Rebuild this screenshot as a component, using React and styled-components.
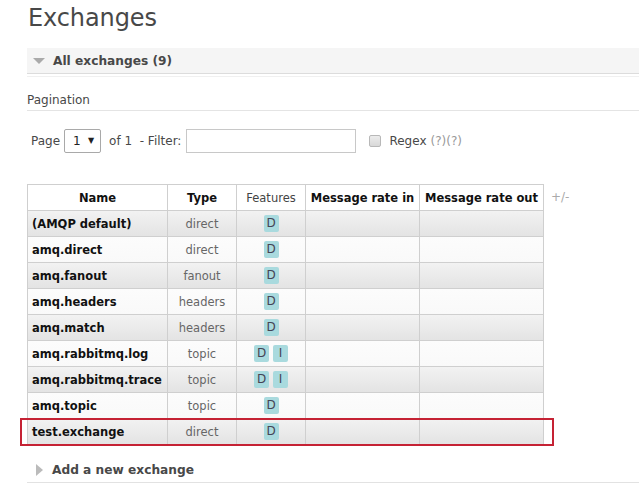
import React from "react";
import styled, { createGlobalStyle } from "styled-components";

const GlobalStyle = createGlobalStyle`
  body {
    margin: 0;
    background: #fff;
    font-family: "DejaVu Sans", Verdana, sans-serif;
    font-size: 12px;
    color: #484848;
  }
`;

const Page = styled.div`
  padding: 0 0 0 27px;
`;

const Title = styled.h1`
  margin: 0;
  padding: 4px 0 0 1px;
  height: 44px;
  font-size: 24px;
  font-weight: normal;
  color: #484848;
  letter-spacing: -0.1px;
`;

const SectionHeader = styled.div`
  display: flex;
  align-items: center;
  gap: 8px;
  height: 25px;
  padding-left: 6px;
  background: #f5f5f5;
  border-bottom: 1px solid #dcdcdc;
  font-size: 12.2px;
  font-weight: bold;
  color: #484848;
`;

const Faint = styled.div`
  height: 2px;
  border-bottom: 1px solid #f0f0f0;
`;

const Arrow = styled.span`
  width: 0;
  height: 0;
  border-style: solid;
  border-color: transparent;
  ${({ $open }) =>
    $open
      ? `border-width: 6px 6px 0 6px; border-top-color: #aaa;`
      : `border-width: 6px 0 6px 7px; border-left-color: #bbb;`}
`;

const SubHeading = styled.h3`
  margin: 16px 0 0;
  padding-bottom: 3px;
  font-size: 12px;
  font-weight: normal;
  color: #484848;
  border-bottom: 1px solid #e4e4e4;
`;

const FilterRow = styled.div`
  display: flex;
  align-items: center;
  margin: 17px 0 0 4px;
  height: 25px;
  font-size: 12px;
  color: #484848;
`;

const Select = styled.div`
  display: flex;
  align-items: center;
  justify-content: space-between;
  box-sizing: border-box;
  width: 37px;
  height: 24px;
  margin: 0 8px 0 4px;
  padding: 0 6px 0 8px;
  border: 1px solid #a9a9a9;
  border-radius: 2px;
  background: #fff;
  color: #222;
  font-size: 12px;
`;

const SelectArrow = styled.span`
  font-size: 8px;
  color: #222;
`;

const Input = styled.div`
  box-sizing: border-box;
  width: 170px;
  height: 24px;
  margin-left: 5px;
  border: 1px solid #c8c8c8;
  background: #fff;
`;

const Check = styled.span`
  box-sizing: border-box;
  width: 12px;
  height: 12px;
  margin: 0 8px 0 13px;
  border: 1px solid #b8b8b8;
  border-radius: 2px;
  background: linear-gradient(#ececec, #d8d8d8);
`;

const Help = styled.span`
  color: #999;
  margin-left: 4px;
`;

const TableWrap = styled.div`
  display: flex;
  align-items: flex-start;
  margin-top: 31px;
`;

const Table = styled.table`
  border-collapse: collapse;
  table-layout: fixed;
  width: 517px;
  font-size: 11.5px;
`;

const Th = styled.th`
  height: 25px;
  padding: 0 4px;
  border: 1px solid #cfcfcf;
  background: #fff;
  font-weight: ${({ $light }) => ($light ? "normal" : "bold")};
  color: ${({ $light }) => ($light ? "#444" : "#111")};
  text-align: center;
  white-space: nowrap;
`;

const Row = styled.tr`
  background: ${({ $alt }) =>
    $alt
      ? "linear-gradient(#f2f2f2, #e3e3e3)"
      : "linear-gradient(#fcfcfc, #f9f9f9)"};
`;

const Td = styled.td`
  height: 25px;
  padding: 0 4px;
  border: 1px solid #cfcfcf;
  text-align: center;
  white-space: nowrap;
  color: #666;
`;

const NameCell = styled(Td)`
  text-align: left;
  font-weight: bold;
  color: #111;
`;

const Badge = styled.span`
  display: inline-block;
  min-width: 15px;
  height: 17px;
  line-height: 17px;
  margin: 0 2px;
  border-radius: 2px;
  background: #a9dade;
  color: #445;
  font-size: 12px;
  text-align: center;
`;

const PlusMinus = styled.span`
  margin: 6px 0 0 7px;
  color: #aaa;
  font-size: 12px;
`;

const Marked = styled.div`
  position: absolute;
  left: -7px;
  right: -10px;
  bottom: -1px;
  height: 28px;
  box-sizing: border-box;
  border: 2px solid #c52234;
  pointer-events: none;
`;

const TableArea = styled.div`
  position: relative;
`;

const Footer = styled.div`
  display: flex;
  align-items: center;
  gap: 9px;
  margin-top: 12px;
  height: 25px;
  padding-left: 9px;
  border-bottom: 1px solid #e2e2e2;
  font-size: 12.2px;
  font-weight: bold;
  color: #484848;
`;

const columns = [
  { label: "Name", width: 140 },
  { label: "Type", width: 69 },
  { label: "Features", width: 69, light: true },
  { label: "Message rate in", width: 114 },
  { label: "Message rate out", width: 124 },
];

const exchanges = [
  { name: "(AMQP default)", type: "direct", features: ["D"] },
  { name: "amq.direct", type: "direct", features: ["D"] },
  { name: "amq.fanout", type: "fanout", features: ["D"] },
  { name: "amq.headers", type: "headers", features: ["D"] },
  { name: "amq.match", type: "headers", features: ["D"] },
  { name: "amq.rabbitmq.log", type: "topic", features: ["D", "I"] },
  { name: "amq.rabbitmq.trace", type: "topic", features: ["D", "I"] },
  { name: "amq.topic", type: "topic", features: ["D"] },
  { name: "test.exchange", type: "direct", features: ["D"] },
];

export default function App() {
  return (
    <>
      <GlobalStyle />
      <Page>
        <Title>Exchanges</Title>
        <SectionHeader>
          <Arrow $open />
          All exchanges (9)
        </SectionHeader>
        <Faint />
        <SubHeading>Pagination</SubHeading>
        <FilterRow>
          Page
          <Select>
            1 <SelectArrow>▼</SelectArrow>
          </Select>
          of 1&nbsp;&nbsp;- Filter:
          <Input />
          <Check />
          Regex <Help>(?)(?)</Help>
        </FilterRow>
        <TableWrap>
          <TableArea>
            <Table>
              <colgroup>
                {columns.map((c) => (
                  <col key={c.label} width={c.width} />
                ))}
              </colgroup>
              <thead>
                <tr>
                  {columns.map((c) => (
                    <Th key={c.label} $light={c.light}>
                      {c.label}
                    </Th>
                  ))}
                </tr>
              </thead>
              <tbody>
                {exchanges.map((ex, i) => (
                  <Row key={ex.name} $alt={i % 2 === 0}>
                    <NameCell>{ex.name}</NameCell>
                    <Td>{ex.type}</Td>
                    <Td>
                      {ex.features.map((f) => (
                        <Badge key={f}>{f}</Badge>
                      ))}
                    </Td>
                    <Td />
                    <Td />
                  </Row>
                ))}
              </tbody>
            </Table>
            <Marked />
          </TableArea>
          <PlusMinus>+/-</PlusMinus>
        </TableWrap>
        <Footer>
          <Arrow />
          Add a new exchange
        </Footer>
      </Page>
    </>
  );
}
